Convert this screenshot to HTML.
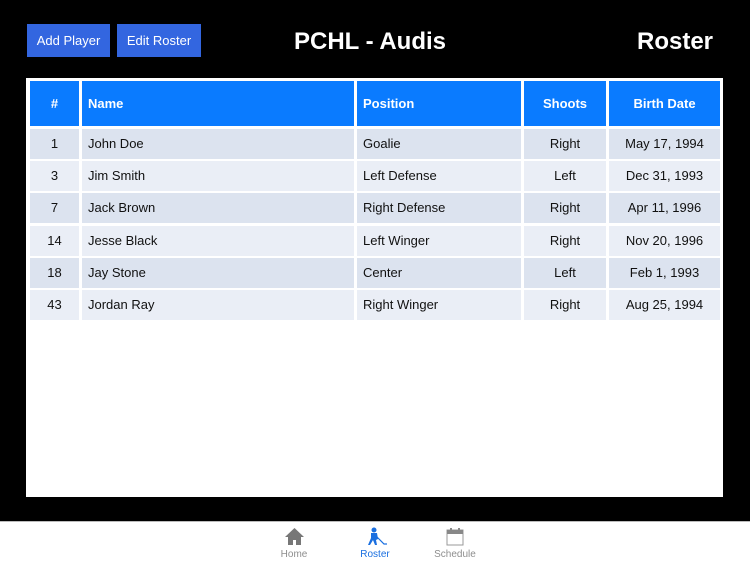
<!DOCTYPE html><html><head><style>
body{margin:0;width:750px;height:563px;background:#000;position:relative;font-family:"Liberation Sans",sans-serif;overflow:hidden}
.btn{position:absolute;top:24px;height:33px;background:#3366e0;color:#fff;font-size:13px;line-height:33px;text-align:center}
.t{position:absolute;color:#fff;font-size:24px;top:28px;font-weight:bold}
.box{position:absolute;left:26px;top:78px;width:697px;height:419px;background:#fff}
.c{position:absolute;font-size:13px;color:#111;box-sizing:border-box;padding-left:6px}
.h{background:#0a7bff;color:#fff;font-weight:bold}
.tab{position:absolute;left:0;top:521px;width:750px;height:42px;background:#fff;border-top:1px solid #bbb}
.tl{position:absolute;top:27px;font-size:10px;color:#8e8e8e;width:60px;text-align:center}
</style></head><body>
<div class="btn" style="left:27px;width:83px">Add Player</div>
<div class="btn" style="left:117px;width:84px">Edit Roster</div>
<div class="t" style="left:294px">PCHL - Audis</div>
<div class="t" style="left:637px">Roster</div>
<div class="box"></div>
<div id="tbl"></div>
<div class="tab">
<svg style="position:absolute;left:284px;top:5px" width="21" height="19" viewBox="0 0 21 19"><path d="M10.5 1L1 10h3v8h5v-5h3v5h5v-8h3z" fill="#777"/></svg>
<div class="tl" style="left:264px">Home</div>
<svg style="position:absolute;left:365px;top:5px" width="22" height="19" viewBox="0 0 22 19"><circle cx="9" cy="3" r="2.5" fill="#1a6fe0"/><path d="M6 6h6l1 6-2 1 1 5h-2l-2-5-3 5H3l3-7z" fill="#1a6fe0"/><path d="M12 10l7 7h3" stroke="#1a6fe0" stroke-width="1.2" fill="none"/></svg>
<div class="tl" style="left:345px;color:#1a6fe0">Roster</div>
<svg style="position:absolute;left:446px;top:5px" width="18" height="19" viewBox="0 0 18 19"><rect x="1" y="3" width="16" height="15" fill="#fff" stroke="#999"/><rect x="1" y="3" width="16" height="4" fill="#888"/><rect x="4" y="1" width="2" height="4" fill="#888"/><rect x="12" y="1" width="2" height="4" fill="#888"/></svg>
<div class="tl" style="left:425px">Schedule</div>
</div>
<script>
var cols=[[30,49,1],[82,272,0],[357,164,0],[524,82,1],[609,111,1]];
var rows=[["#","Name","Position","Shoots","Birth Date"],["1","John Doe","Goalie","Right","May 17, 1994"],["3","Jim Smith","Left Defense","Left","Dec 31, 1993"],["7","Jack Brown","Right Defense","Right","Apr 11, 1996"],["14","Jesse Black","Left Winger","Right","Nov 20, 1996"],["18","Jay Stone","Center","Left","Feb 1, 1993"],["43","Jordan Ray","Right Winger","Right","Aug 25, 1994"]];
var h='';
rows.forEach(function(r,i){var top=i==0?80:128+(i-1)*32.2;var ht=i==0?45:30;
cols.forEach(function(c,j){var bg=i==0?'':(i%2?'background:#dce3ef':'background:#eaeef6');
h+='<div class="c'+(i==0?' h':'')+'" style="left:'+c[0]+'px;top:'+(top+1)+'px;width:'+c[1]+'px;height:'+ht+'px;line-height:'+ht+'px;'+bg+(c[2]?';text-align:center;padding-left:0':'')+'">'+r[j]+'</div>';});});
document.getElementById('tbl').innerHTML=h;
</script>
</body></html>
